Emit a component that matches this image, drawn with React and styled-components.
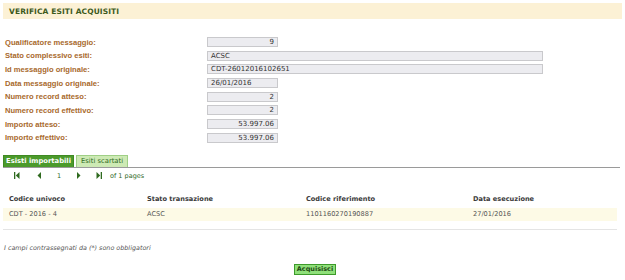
import React from "react";
import styled, { createGlobalStyle } from "styled-components";

const Global = createGlobalStyle`
  html, body { margin: 0; padding: 0; background: #fff; }
  body { font-family: "DejaVu Sans", Verdana, sans-serif; }
`;

const Page = styled.div`
  width: 625px;
  height: 280px;
  display: flex;
  flex-direction: column;
  overflow: hidden;
`;

const TitleBar = styled.div`
  margin: 3px 3px 0 3px;
  height: 16px;
  background: #fcf1d5;
  display: flex;
  align-items: center;
  padding-left: 6px;
  font-size: 7.5px;
  font-weight: bold;
  color: #3d5a1c;
  letter-spacing: 0.1px;
`;

const Form = styled.div`
  margin-top: 18px;
  display: flex;
  flex-direction: column;
  gap: 3.7px;
`;

const Row = styled.div`
  display: grid;
  grid-template-columns: 207px auto;
  align-items: center;
  height: 10px;
`;

const Label = styled.div`
  padding-left: 5px;
  font-family: "Liberation Sans", Arial, sans-serif;
  font-size: 7.6px;
  font-weight: bold;
  color: #a8692c;
`;

const Field = styled.div`
  box-sizing: border-box;
  height: 10px;
  width: ${(p) => (p.$wide ? "336px" : "71px")};
  background: #ececf0;
  border: 1px solid #c9c9cc;
  font-size: 7px;
  color: #333;
  line-height: 8px;
  padding: 0 3px;
  text-align: ${(p) => (p.$right ? "right" : "left")};
`;

const Tabs = styled.div`
  margin: 12px 5px 0 3px;
  display: flex;
  gap: 2px;
  border-bottom: 1px solid #9a9a9a;
  align-items: flex-end;
`;

const Tab = styled.div`
  height: 12px;
  box-sizing: border-box;
  padding: ${(p) => (p.$active ? "0 2px" : "0 4px")};
  display: flex;
  align-items: center;
  font-size: 6.8px;
  font-weight: ${(p) => (p.$active ? "bold" : "normal")};
  color: ${(p) => (p.$active ? "#ffffff" : "#2f6a1f")};
  background: ${(p) => (p.$active ? "#4b9a2b" : "#cdeab4")};
  border: 1px solid ${(p) => (p.$active ? "#3f8a22" : "#9fcf86")};
  border-bottom: none;
`;

const Pager = styled.div`
  display: flex;
  align-items: center;
  height: 14px;
  margin-top: 1px;
  padding-left: 14px;
  font-size: 6.5px;
  color: #2f6a1f;
`;

const PagerItem = styled.span`
  display: inline-flex;
  align-items: center;
  width: ${(p) => p.$w}px;
`;

const Table = styled.div`
  margin: 9px 8px 0 3px;
  display: flex;
  flex-direction: column;
`;

const TRow = styled.div`
  display: grid;
  grid-template-columns: 138px 159px 167px auto;
  align-items: center;
  height: ${(p) => (p.$head ? "14px" : "13px")};
  padding-left: 6px;
  background: ${(p) => (p.$head ? "transparent" : "#fdfae6")};
  margin-top: ${(p) => (p.$head ? "0" : "2px")};
  font-size: 6.6px;
  color: ${(p) => (p.$head ? "#3a3a3a" : "#555")};
  font-weight: ${(p) => (p.$head ? "600" : "normal")};
`;

const Divider = styled.div`
  margin: 8px 8px 0 3px;
  border-top: 1px solid #e4e4e4;
`;

const Note = styled.div`
  margin-top: 14px;
  padding-left: 4px;
  font-size: 6.4px;
  font-style: italic;
  color: #555;
`;

const ButtonRow = styled.div`
  display: flex;
  justify-content: center;
  margin-top: 12px;
`;

const Button = styled.button`
  font-family: "DejaVu Sans", Verdana, sans-serif;
  font-size: 6.5px;
  font-weight: bold;
  color: #1d4a12;
  background: #8fe07a;
  border: 1px solid #3d9a2a;
  padding: 0 2px;
  height: 11px;
  line-height: 9px;
  margin-left: 5px;
`;

const Ico = ({ kind }) => {
  const c = "#2f6a1f";
  if (kind === "first")
    return (
      <svg width="6" height="7" viewBox="0 0 6 7">
        <rect x="0" y="0" width="1.3" height="7" fill={c} />
        <polygon points="5.5,0 1.8,3.5 5.5,7" fill={c} />
      </svg>
    );
  if (kind === "prev")
    return (
      <svg width="5" height="7" viewBox="0 0 5 7">
        <polygon points="4,0 0.5,3.5 4,7" fill={c} />
      </svg>
    );
  if (kind === "next")
    return (
      <svg width="5" height="7" viewBox="0 0 5 7">
        <polygon points="1,0 4.5,3.5 1,7" fill={c} />
      </svg>
    );
  return (
    <svg width="6" height="7" viewBox="0 0 6 7">
      <polygon points="0.5,0 4.2,3.5 0.5,7" fill={c} />
      <rect x="4.7" y="0" width="1.3" height="7" fill={c} />
    </svg>
  );
};

const fields = [
  ["Qualificatore messaggio:", "9", false, true],
  ["Stato complessivo esiti:", "ACSC", true, false],
  ["Id messaggio originale:", "CDT-26012016102651", true, false],
  ["Data messaggio originale:", "26/01/2016", false, false],
  ["Numero record atteso:", "2", false, true],
  ["Numero record effettivo:", "2", false, true],
  ["Importo atteso:", "53.997.06", false, true],
  ["Importo effettivo:", "53.997.06", false, true],
];

export default function App() {
  return (
    <Page>
      <Global />
      <TitleBar>VERIFICA ESITI ACQUISITI</TitleBar>
      <Form>
        {fields.map(([l, v, wide, right]) => (
          <Row key={l}>
            <Label>{l}</Label>
            <Field $wide={wide} $right={right}>{v}</Field>
          </Row>
        ))}
      </Form>
      <Tabs>
        <Tab $active>Esisti importabili</Tab>
        <Tab>Esiti scartati</Tab>
      </Tabs>
      <Pager>
        <PagerItem $w={23}><Ico kind="first" /></PagerItem>
        <PagerItem $w={20}><Ico kind="prev" /></PagerItem>
        <PagerItem $w={19}>1</PagerItem>
        <PagerItem $w={20}><Ico kind="next" /></PagerItem>
        <PagerItem $w={14}><Ico kind="last" /></PagerItem>
        <span>of 1 pages</span>
      </Pager>
      <Table>
        <TRow $head>
          <span>Codice univoco</span>
          <span>Stato transazione</span>
          <span>Codice riferimento</span>
          <span>Data esecuzione</span>
        </TRow>
        <TRow>
          <span>CDT - 2016 - 4</span>
          <span>ACSC</span>
          <span>1101160270190887</span>
          <span>27/01/2016</span>
        </TRow>
      </Table>
      <Divider />
      <Note>I campi contrassegnati da (*) sono obbligatori</Note>
      <ButtonRow>
        <Button>Acquisisci</Button>
      </ButtonRow>
    </Page>
  );
}
